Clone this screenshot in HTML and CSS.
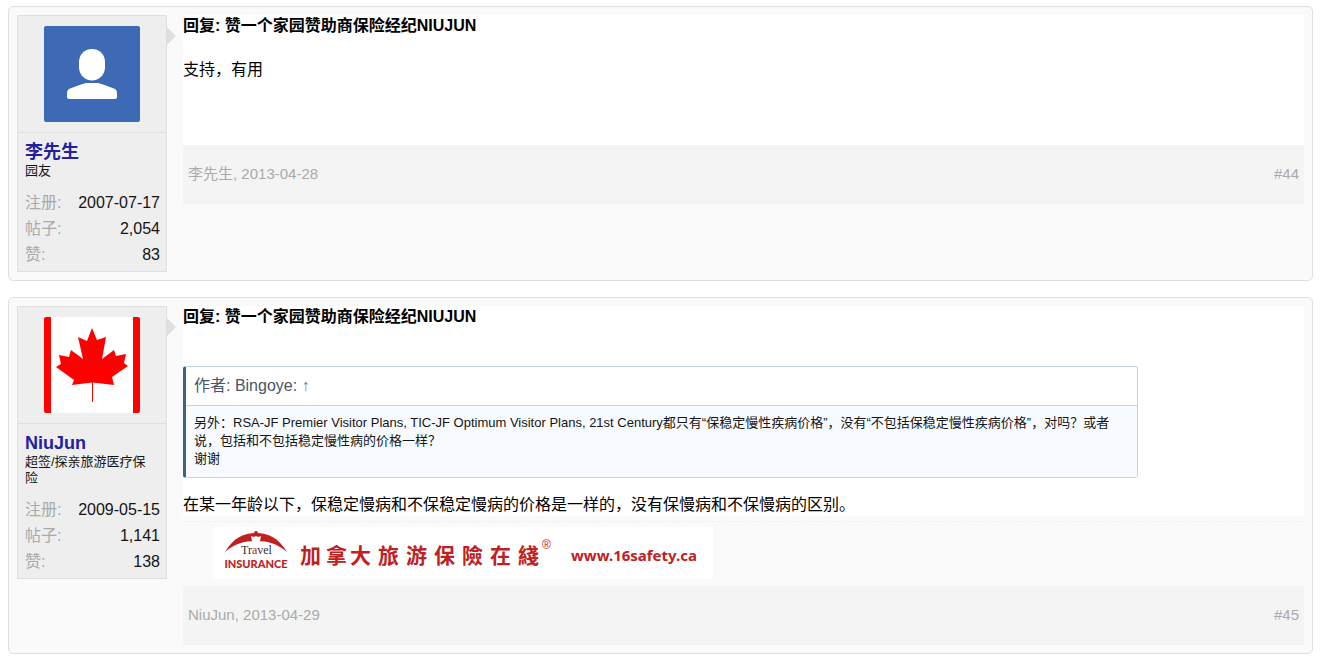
FILE: index.html
```html
<!DOCTYPE html>
<html lang="zh-CN">
<head>
  <meta charset="UTF-8" />
  <meta name="viewport" content="width=device-width, initial-scale=1.0"/>
  <title>回复: 赞一个家园赞助商保险经纪NIUJUN</title>
  <link rel="stylesheet" href="styles.css">
</head>
<body>

  <ol class="message-list">

    <!-- Post 44 -->
    <li class="message">
      <div class="user-block">
        <div class="avatar-holder">
          <a href="#" class="avatar" aria-label="李先生">
            <svg viewBox="0 0 96 96">
              <rect width="96" height="96" fill="#3d69b5"/>
              <path d="M48 23c8 0 13 6 13 13v5c0 8-6 13.500-13 13.500S35 49 35 41v-5c0-7 5-13 13-13z" fill="#fff"/>
              <path d="M42 57h12c7 2 12 4 17 6q2 1 2 4v4q0 2-2 2H25q-2 0-2-2v-4q0-3 2-4c5-2 10-4 17-6z" fill="#fff"/>
            </svg>
          </a>
        </div>
        <div class="user-text">
          <a href="#" class="username">李先生</a>
          <div class="user-title">园友</div>
        </div>
        <dl class="user-stats">
          <div><dt>注册:</dt><dd>2007-07-17</dd></div>
          <div><dt>帖子:</dt><dd>2,054</dd></div>
          <div><dt>赞:</dt><dd>83</dd></div>
        </dl>
        <span class="arrow"></span>
      </div>
      <div class="message-info">
        <div class="message-content">
          <h3>回复: 赞一个家园赞助商保险经纪NIUJUN</h3>
          <p>支持，有用</p>
        </div>
        <div class="message-meta">
          <span><a href="#">李先生</a>, <a href="#">2013-04-28</a></span>
          <a href="#">#44</a>
        </div>
      </div>
    </li>

    <!-- Post 45 -->
    <li class="message">
      <div class="user-block">
        <div class="avatar-holder">
          <a href="#" class="avatar" aria-label="NiuJun">
            <svg viewBox="0 0 96 96">
              <rect width="96" height="96" fill="#fff"/>
              <path d="M0 0h7v96H0zM89 0h7v96h-7z" fill="#f00"/>
              <path d="M48 11l5 12 9-3-4 22 12-9 2 6 10-2-2 9 4 3-16 11 2 8-21-2.500V85h-1V65.500L28 68l2-5-18-13 5-3-2-9 10 2 2-7 12 9-5-22 9 4z" fill="#f00"/>
            </svg>
          </a>
        </div>
        <div class="user-text">
          <a href="#" class="username">NiuJun</a>
          <div class="user-title">超签/探亲旅游医疗保险</div>
        </div>
        <dl class="user-stats">
          <div><dt>注册:</dt><dd>2009-05-15</dd></div>
          <div><dt>帖子:</dt><dd>1,141</dd></div>
          <div><dt>赞:</dt><dd>138</dd></div>
        </dl>
        <span class="arrow"></span>
      </div>
      <div class="message-info">
        <div class="message-content">
          <h3>回复: 赞一个家园赞助商保险经纪NIUJUN</h3>
          <blockquote class="quote">
            <div class="quote-author">作者: Bingoye: <a href="#">↑</a></div>
            <div class="quote-text">另外：RSA-JF Premier Visitor Plans, TIC-JF Optimum Visitor Plans, 21st Century都只有“保稳定慢性疾病价格”，没有“不包括保稳定慢性疾病价格”，对吗？或者说，包括和不包括稳定慢性病的价格一样？<br>谢谢</div>
          </blockquote>
          <p>在某一年龄以下，保稳定慢病和不保稳定慢病的价格是一样的，没有保慢病和不保慢病的区别。</p>
        </div>
        <div class="signature">
          <a href="#" class="banner">
            <svg viewBox="0 0 500 52" fill="#c0211f">
              <path d="M12 25C20 11 31 6 43 6s23 5 31 19C65 17 55 14 43 14S21 17 12 25z"/>
              <circle cx="43" cy="6" r="2"/>
              <path d="M43 9l2 1 3-1-1 5-4 3-4-3-1-5 3 1z" fill="#fff"/>
              <text x="28" y="27" class="logo-travel">Tr<tspan class="logo-at">a</tspan>vel</text>
              <text x="43" y="41" class="logo-insurance">INSURANCE</text>
              <text x="87 113 137 165 193 221 249 277 305" y="36" class="banner-name">加拿大旅游保險在綫</text>
              <text x="329" y="22" class="banner-mark">®</text>
              <text x="358" y="34" class="banner-url">www.16safety.ca</text>
            </svg>
          </a>
        </div>
        <div class="message-meta">
          <span><a href="#">NiuJun</a>, <a href="#">2013-04-29</a></span>
          <a href="#">#45</a>
        </div>
      </div>
    </li>

  </ol>

</body>
</html>
```
FILE: styles.css
```css
* {
  box-sizing: border-box;
}
body {
  font-family: "Liberation Sans", Arial, "Noto Sans CJK SC", sans-serif;
  font-size: 16px;
  line-height: 20px;
  color: #141414;
  background: #fff;
  margin: 0;
  padding: 6px 7px 4px 8px;
}
a {
  color: inherit;
  text-decoration: none;
}
h3, p, dl, dd, ol, blockquote {
  margin: 0;
  padding: 0;
}
.message-list {
  list-style: none;
  display: flex;
  flex-direction: column;
  gap: 16px;
}
.message {
  display: flex;
  align-items: flex-start;
  gap: 16px;
  padding: 8px;
  background: #fafafa;
  border: 1px solid #dfdfdf;
  border-radius: 5px;
}

/* user column */
.user-block {
  position: relative;
  flex: 0 0 150px;
  background: #eee;
  border: 1px solid #dfdfdf;
}
.avatar-holder {
  display: flex;
  justify-content: center;
  padding: 10px;
  border-bottom: 1px solid #dfdfdf;
}
.avatar {
  width: 96px;
  height: 96px;
  border-radius: 2px;
  overflow: hidden;
}
.avatar svg, .banner svg {
  display: block;
  width: 100%;
}
.user-text {
  padding: 9px 16px 0 7px;
}
.username {
  display: block;
  font-size: 18px;
  font-weight: bold;
  line-height: 21px;
  color: #22229c;
}
.user-title {
  font-size: 13px;
  line-height: 16px;
}
.user-stats {
  padding: 11px 6px 3px 7px;
}
.user-stats div {
  display: flex;
  justify-content: space-between;
  line-height: 26px;
}
.user-stats dt {
  color: #aaa;
}
.arrow {
  position: absolute;
  top: 10px;
  left: 100%;
  border: 10px solid transparent;
  border-left-color: #dfdfdf;
  border-right-width: 0;
}

/* message column */
.message-info {
  flex: 1;
  min-width: 0;
}
.message-content {
  min-height: 130px;
  padding: 1px 0;
  background: #fff;
}
.message-content h3 {
  font-size: 16px;
  color: #000;
  margin-bottom: 24px;
}
.message-content p {
  color: #000;
}
.message-meta {
  display: flex;
  justify-content: space-between;
  padding: 19px 5px 20px;
  background: #f4f4f4;
  color: #aaa;
  font-size: 15px;
}
.quote {
  margin: 39px 166px 17px 0;
  border: 1px solid #c1d5e8;
  border-left: 3px solid #3a6384;
  border-radius: 3px;
}
.quote-author {
  padding: 9px 8px;
  border-bottom: 1px solid #c1d5e8;
  color: #4a5568;
}
.quote-author a {
  color: #6a78bd;
}
.quote-text {
  padding: 8px 8px 9px;
  background: #f7fbff;
  font-size: 13px;
  line-height: 18px;
}

/* signature banner */
.signature {
  margin-top: 5px;
  padding: 5px 30px 7px;
  border-top: 1px dashed #f0f0f0;
}
.banner {
  display: block;
  max-width: 500px;
  background: #fff;
}
.logo-travel {
  font-family: "Liberation Serif", serif;
  font-size: 12px;
  fill: #333;
}
.logo-at {
  fill: #c0211f;
}
.logo-insurance {
  font-family: Lato, sans-serif;
  font-size: 11px;
  font-weight: 900;
  text-anchor: middle;
}
.banner-name {
  font-family: "Noto Sans CJK TC", sans-serif;
  font-size: 21px;
  font-weight: bold;
}
.banner-mark {
  font-family: "Liberation Sans", sans-serif;
  font-size: 12px;
}
.banner-url {
  font-family: "Noto Sans", sans-serif;
  font-size: 15px;
  font-weight: bold;
}
```
